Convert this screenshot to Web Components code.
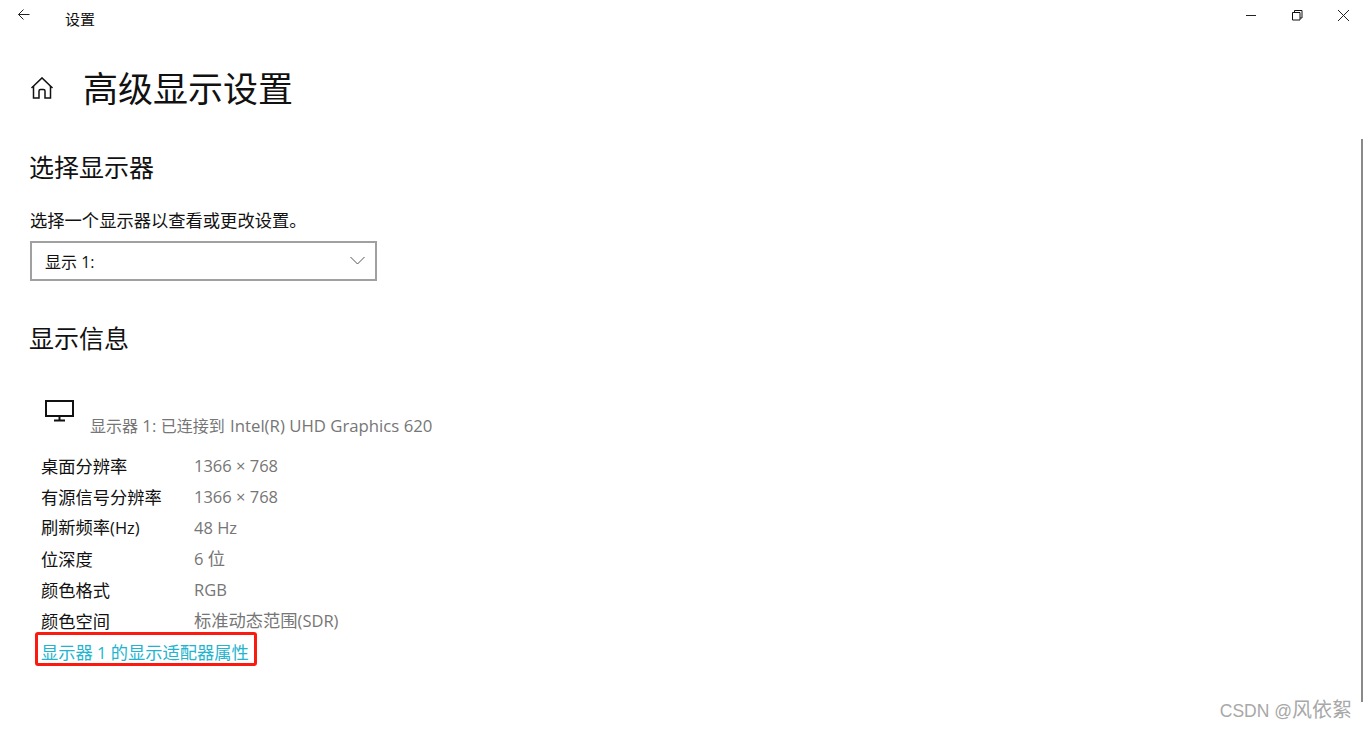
<!DOCTYPE html>
<html lang="zh-CN">
<head>
<meta charset="utf-8">
<title>设置</title>
<style>
  html, body { margin: 0; height: 100%; background: #fff; overflow: hidden; }
  body { font-family: "Noto Sans CJK SC", sans-serif; color: #000; }
  .l { font-family: "Open Sans", sans-serif; font-size: 16.5px; }
  .head-l { font-family: "Open Sans", sans-serif; font-size: 16.75px; }
  .head-gap { padding-left: 1px; }
</style>
</head>
<body>
<settings-window>
  <title-bar slot="bar">设置</title-bar>
  <page-title>高级显示设置</page-title>
  <section-head style="margin-top:40px">选择显示器</section-head>
  <plain-text style="margin-top:25px">选择一个显示器以查看或更改设置。</plain-text>
  <select-box style="margin-top:10px">显示 1:</select-box>
  <section-head style="margin-top:40px">显示信息</section-head>
  <monitor-head style="margin-top:46px">显示器<span class="head-l"> 1: </span>已连接到<span class="head-l head-gap"> Intel(R) UHD Graphics 620</span></monitor-head>
  <info-list style="margin-top:13px">
    <info-row><span slot="k">桌面分辨率</span><span class="l">1366 × 768</span></info-row>
    <info-row><span slot="k">有源信号分辨率</span><span class="l">1366 × 768</span></info-row>
    <info-row><span slot="k">刷新频率<span class="l">(Hz)</span></span><span class="l">48 Hz</span></info-row>
    <info-row><span slot="k">位深度</span><span class="l">6 </span>位</info-row>
    <info-row><span slot="k">颜色格式</span><span class="l">RGB</span></info-row>
    <info-row><span slot="k">颜色空间</span>标准动态范围<span class="l">(SDR)</span></info-row>
  </info-list>
  <marked-link>显示器<span class="l"> 1 </span>的显示适配器属性</marked-link>
</settings-window>

<script>
const CJK = `"Noto Sans CJK SC", sans-serif`;
const LATIN_CJK = `"Open Sans", "Noto Sans CJK SC", sans-serif`;

class BaseEl extends HTMLElement {
  constructor() {
    super();
    this.attachShadow({ mode: "open" });
  }
  connectedCallback() {
    this.shadowRoot.innerHTML = this.markup();
  }
}

class SettingsWindow extends BaseEl {
  markup() {
    return `
      <style>
        :host { display: block; position: relative; height: 730px; overflow: hidden; background: #fff; }
        main { padding: 0 0 0 29px; display: flex; flex-direction: column; align-items: flex-start; }
        .scroll { position: absolute; right: 3px; top: 139px; width: 2px; height: 563px; background: #8a8a8a; }
        .mark { position: absolute; right: 14px; top: 694px; font: 20px/30px ${CJK}; color: #a8a8a8; }
        .mark span { font: 17.500px/30px "Liberation Sans", sans-serif; }
      </style>
      <slot name="bar"></slot>
      <main><slot></slot></main>
      <div class="scroll"></div>
      <div class="mark"><span>CSDN @</span>风依絮</div>
    `;
  }
}

class TitleBar extends BaseEl {
  markup() {
    return `
      <style>
        :host { display: flex; align-items: flex-start; height: 40px; font: 15px/20px ${CJK}; color: #111; }
        .back { width: 65px; height: 30px; padding: 9px 0 0 18px; box-sizing: border-box; flex: none; }
        .back svg, .ctl svg { display: block; }
        .name { padding-top: 9px; flex: 1; }
        .ctl { display: flex; padding: 9px 16px 0 0; gap: 34px; }
      </style>
      <div class="back">
        <svg width="12" height="12" viewBox="0 0 12 12" fill="none" stroke="#222"><path d="M.5 5.500h11M5.500 .5l-5 5 5 5"/></svg>
      </div>
      <div class="name"><slot></slot></div>
      <div class="ctl">
        <svg width="12" height="12" viewBox="0 0 12 12" fill="none" stroke="#222"><path d="M1 6.500h10"/></svg>
        <svg width="12" height="12" viewBox="0 0 12 12" fill="none" stroke="#111"><path d="M1.500 3.500h7.500v7.500h-7.500zM3.500 3.500v-2h7.500v7.500h-2"/></svg>
        <svg width="13" height="13" viewBox="0 0 13 13" fill="none" stroke="#222"><path d="M1 1l11 11M12 1 1 12"/></svg>
      </div>
    `;
  }
}

class PageTitle extends BaseEl {
  markup() {
    return `
      <style>
        :host { display: flex; align-items: center; height: 46px; margin-top: 24px; margin-left: 1px; font: 35px/46px ${CJK}; color: #111; }
        svg { width: 24px; height: 22px; margin: 1px 29px 0 0; flex: none; }
      </style>
      <svg viewBox="0 0 24 22" fill="none" stroke="#111" stroke-width="1.500">
        <path d="M1.500 11 12 .9 22.500 11"/>
        <path d="M3.500 9v12h5.500v-7a1.500 1.500 0 0 1 1.500-1.500h3a1.500 1.500 0 0 1 1.500 1.500v7h5.500V9"/>
      </svg>
      <slot></slot>
    `;
  }
}

class SectionHead extends BaseEl {
  markup() {
    return `<style>:host { display: block; font: 25px/33px ${CJK}; color: #111; }</style><slot></slot>`;
  }
}

class PlainText extends BaseEl {
  markup() {
    return `<style>:host { display: block; margin-left: 1px; font: 17.300px/23px ${CJK}; color: #111; }</style><slot></slot>`;
  }
}

class SelectBox extends BaseEl {
  markup() {
    return `
      <style>
        :host { display: flex; align-items: center; justify-content: space-between; box-sizing: border-box;
          width: 347px; height: 40px; margin-left: 1px; border: 2px solid #a0a0a0; padding: 1px 10px 0 13px;
          font: 16px/22px ${LATIN_CJK}; color: #111; }
        svg { margin-top: -2px; }
      </style>
      <slot></slot>
      <svg width="15" height="9" viewBox="0 0 15 9" fill="none" stroke="#555"><path d="M.5 1l7 7 7-7"/></svg>
    `;
  }
}

class MonitorHead extends BaseEl {
  markup() {
    return `
      <style>
        :host { display: flex; align-items: flex-end; margin-left: 16px; font: 16px/22px ${CJK}; color: #767676; }
        svg { width: 30px; height: 22px; margin: 0 15px 15px 0; flex: none; }
      </style>
      <svg viewBox="0 0 30 22" fill="none" stroke="#111" stroke-width="2">
        <path d="M1 1h27v15H1zM14.500 16v4M9 20.500h11"/>
      </svg>
      <span><slot></slot></span>
    `;
  }
}

class InfoList extends BaseEl {
  markup() {
    return `<style>:host { display: block; margin-left: 12px; }</style><slot></slot>`;
  }
}

class InfoRow extends BaseEl {
  markup() {
    return `
      <style>
        :host { display: flex; height: 31px; align-items: center; font: 17.250px/22px ${CJK}; }
        .k { width: 153px; color: #111; flex: none; }
        .v { color: #767676; }
      </style>
      <div class="k"><slot name="k"></slot></div>
      <div class="v"><slot></slot></div>
    `;
  }
}

class MarkedLink extends BaseEl {
  markup() {
    return `
      <style>
        :host { display: block; position: relative; margin-left: 12px; height: 31px; font: 17.250px/31px ${CJK}; color: #22b4cf; white-space: nowrap; }
        .box { position: absolute; left: -6px; top: -4px; width: 222px; height: 34px; box-sizing: border-box;
          border: 3px solid #fb1a10; border-radius: 3px; }
      </style>
      <slot></slot>
      <div class="box"></div>
    `;
  }
}

customElements.define("settings-window", SettingsWindow);
customElements.define("title-bar", TitleBar);
customElements.define("page-title", PageTitle);
customElements.define("section-head", SectionHead);
customElements.define("plain-text", PlainText);
customElements.define("select-box", SelectBox);
customElements.define("monitor-head", MonitorHead);
customElements.define("info-list", InfoList);
customElements.define("info-row", InfoRow);
customElements.define("marked-link", MarkedLink);
</script>
</body>
</html>
